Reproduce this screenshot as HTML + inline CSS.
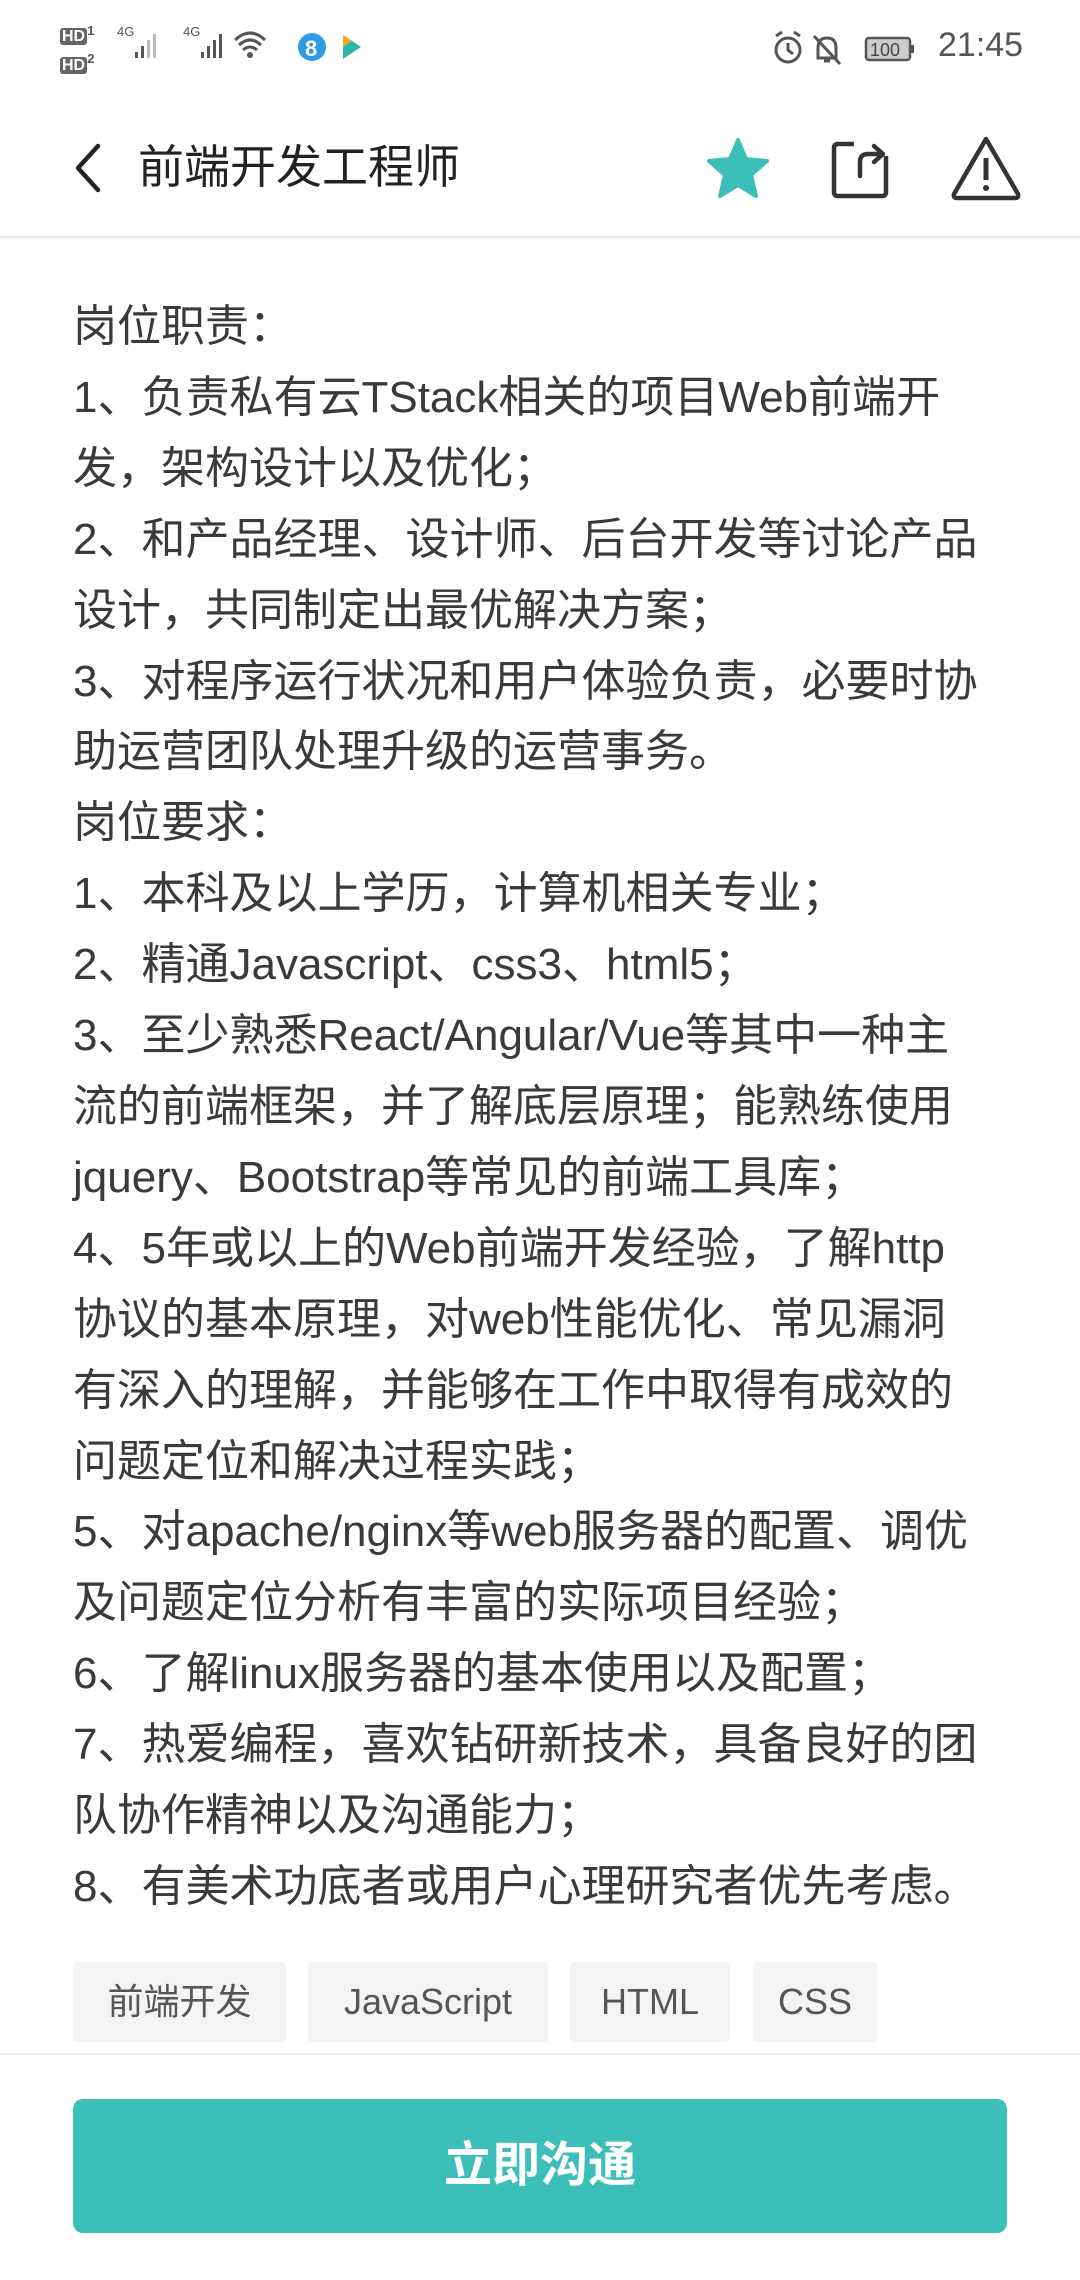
<!DOCTYPE html>
<html><head><meta charset="utf-8"><style>
*{margin:0;padding:0;box-sizing:border-box}
body{width:1080px;height:2280px;background:#fff;position:relative;overflow:hidden;font-family:"Liberation Sans","Noto Sans CJK SC",sans-serif;color:#333}
.abs{position:absolute}
.sb{font-size:34px;color:#555}
.title{left:138px;top:138px;font-size:46px;color:#222;line-height:58px}
.body{left:73px;top:292px;font-size:44px;line-height:70.9px;color:#3a3a3a;white-space:nowrap}
.tag{position:absolute;top:1962px;height:80px;background:#f4f4f4;color:#555;font-size:36px;line-height:80px;text-align:center;border-radius:4px}
.btn{left:73px;top:2099px;width:934px;height:134px;background:#3bbfb8;border-radius:10px;color:#fff;font-size:48px;text-align:center;line-height:134px;font-weight:bold}
</style></head><body>
<!-- status bar -->
<div class="abs" style="left:60px;top:20px;font-size:16px;font-weight:bold;color:#555;line-height:22px">
<span style="background:#666;color:#fff;padding:0 2px;border-radius:3px">HD</span><sup>1</sup><br><span style="background:#666;color:#fff;padding:0 2px;border-radius:3px">HD</span><sup>2</sup></div>
<svg class="abs" style="left:115px;top:22px" width="260" height="42" viewBox="0 0 260 42">
<text x="2" y="14" font-size="13" fill="#555" font-family="Liberation Sans">4G</text>
<rect x="20" y="30" width="3" height="6" fill="#555"/><rect x="26" y="24" width="3" height="12" fill="#555"/><rect x="32" y="18" width="3" height="18" fill="#bbb"/><rect x="38" y="12" width="3" height="24" fill="#bbb"/>
<text x="68" y="14" font-size="13" fill="#555" font-family="Liberation Sans">4G</text>
<rect x="86" y="30" width="3" height="6" fill="#555"/><rect x="92" y="24" width="3" height="12" fill="#555"/><rect x="98" y="18" width="3" height="18" fill="#555"/><rect x="104" y="12" width="3" height="24" fill="#555"/>
<path d="M120 18 Q135 4 150 18 M124 23 Q135 13 146 23 M128 28 Q135 22 142 28" stroke="#555" stroke-width="3" fill="none"/><circle cx="135" cy="33" r="3" fill="#555"/>
<circle cx="197" cy="25" r="14" fill="#2f9be8"/><text x="190" y="34" font-size="22" fill="#fff" font-weight="bold" font-family="Liberation Sans">8</text>
<path d="M228 13 L246 25 L228 37 Z" fill="#2cb6a8"/><path d="M228 13 L237 19 L228 25Z" fill="#f5a623"/>
</svg>
<svg class="abs" style="left:770px;top:28px" width="150" height="40" viewBox="0 0 150 40">
<circle cx="18" cy="22" r="12" stroke="#555" stroke-width="3" fill="none"/><path d="M18 15 V22 L23 26" stroke="#555" stroke-width="3" fill="none"/><path d="M6 8 L12 4 M30 8 L24 4" stroke="#555" stroke-width="3"/>
<path d="M48 30 V20 Q48 10 57 10 Q66 10 66 20 V30 Z M54 33 H60" stroke="#555" stroke-width="3" fill="none"/><path d="M44 8 L70 36" stroke="#555" stroke-width="3"/>
<rect x="96" y="10" width="44" height="22" rx="3" stroke="#555" stroke-width="2.5" fill="#ccc"/><rect x="141" y="17" width="3" height="8" fill="#555"/>
<text x="100" y="28" font-size="18" fill="#444" font-family="Liberation Sans">100</text></svg>
<div class="abs sb" style="left:938px;top:26px">21:45</div>
<!-- nav -->
<svg class="abs" style="left:68px;top:140px" width="40" height="56" viewBox="0 0 40 56"><path d="M30 6 L10 28 L30 50" stroke="#222" stroke-width="4.5" fill="none" stroke-linecap="round" stroke-linejoin="round"/></svg>
<div class="abs title">前端开发工程师</div>
<svg class="abs" style="left:704px;top:136px" width="68" height="66" viewBox="0 0 68 66"><path d="M34 4 L42 23 L63 25 L47 39 L52 60 L34 49 L16 60 L21 39 L5 25 L26 23 Z" fill="#3bbfb8" stroke="#3bbfb8" stroke-width="4" stroke-linejoin="round"/></svg>
<svg class="abs" style="left:830px;top:136px" width="62" height="66" viewBox="0 0 62 66"><path d="M24 8 H8 Q4 8 4 12 V56 Q4 60 8 60 H52 Q56 60 56 56 V20" stroke="#333" stroke-width="4.5" fill="none"/><path d="M30 40 V26 Q30 18 38 18 H52 M44 10 L53 18 L44 26" stroke="#333" stroke-width="4.5" fill="none" stroke-linejoin="round" stroke-linecap="round"/></svg>
<svg class="abs" style="left:950px;top:134px" width="72" height="68" viewBox="0 0 72 68"><path d="M36 5 L68 60 Q69 64 65 64 H7 Q3 64 4 60 Z" stroke="#333" stroke-width="4.5" fill="none" stroke-linejoin="round"/><path d="M36 24 V46" stroke="#333" stroke-width="5"/><circle cx="36" cy="54" r="3" fill="#333"/></svg>
<div class="abs" style="left:0;top:236px;width:1080px;height:2px;background:#e8e8e8"></div>
<!-- body -->
<div class="abs body">岗位职责：<br>1、负责私有云TStack相关的项目Web前端开<br>发，架构设计以及优化；<br>2、和产品经理、设计师、后台开发等讨论产品<br>设计，共同制定出最优解决方案；<br>3、对程序运行状况和用户体验负责，必要时协<br>助运营团队处理升级的运营事务。<br>岗位要求：<br>1、本科及以上学历，计算机相关专业；<br>2、精通Javascript、css3、html5；<br>3、至少熟悉React/Angular/Vue等其中一种主<br>流的前端框架，并了解底层原理；能熟练使用<br>jquery、Bootstrap等常见的前端工具库；<br>4、5年或以上的Web前端开发经验，了解http<br>协议的基本原理，对web性能优化、常见漏洞<br>有深入的理解，并能够在工作中取得有成效的<br>问题定位和解决过程实践；<br>5、对apache/nginx等web服务器的配置、调优<br>及问题定位分析有丰富的实际项目经验；<br>6、了解linux服务器的基本使用以及配置；<br>7、热爱编程，喜欢钻研新技术，具备良好的团<br>队协作精神以及沟通能力；<br>8、有美术功底者或用户心理研究者优先考虑。</div>
<!-- tags -->
<div class="tag" style="left:73px;width:213px">前端开发</div>
<div class="tag" style="left:308px;width:240px">JavaScript</div>
<div class="tag" style="left:570px;width:160px">HTML</div>
<div class="tag" style="left:753px;width:124px">CSS</div>
<div class="abs" style="left:0;top:2053px;width:1080px;height:2px;background:#ececec"></div>
<div class="abs btn">立即沟通</div>
</body></html>
